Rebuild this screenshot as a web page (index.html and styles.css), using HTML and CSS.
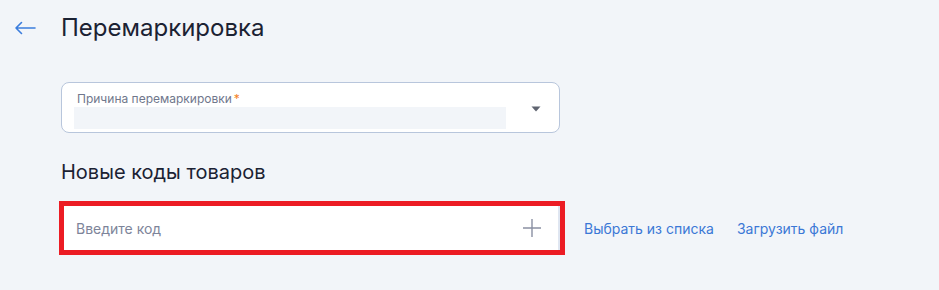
FILE: index.html
```html
<!DOCTYPE html>
<html lang="ru">
<head>
<meta charset="utf-8">
<link rel="stylesheet" href="styles.css">
</head>
<body>
<div class="page">
  <header class="header">
    <button class="back" aria-label="Назад">
      <svg width="22" height="14" viewBox="0 0 22 14"><path d="M21 7H2M7.5 1.5L2 7l5.5 5.5" fill="none" stroke="#3b7ddd" stroke-width="1.6" stroke-linecap="round" stroke-linejoin="round"/></svg>
    </button>
    <h1 class="title">Перемаркировка</h1>
  </header>
  <div class="content">
    <div class="select">
      <div class="select-body">
        <div class="select-label">Причина перемаркировки<span class="req">*</span></div>
        <div class="select-value"></div>
      </div>
      <svg class="caret" width="10" height="6" viewBox="0 0 10 6"><path d="M0.5 0.5h9L5 5.5z" fill="#5f6470"/></svg>
    </div>
    <h2 class="subtitle">Новые коды товаров</h2>
    <div class="code-row">
      <div class="highlight">
        <div class="code-input">
          <span class="placeholder">Введите код</span>
          <svg class="plus" width="18" height="18" viewBox="0 0 18 18"><path d="M9 0v18M0 9h18" stroke="#8a90a3" stroke-width="1.4"/></svg>
        </div>
      </div>
      <a class="link" href="#">Выбрать из списка</a>
      <a class="link" href="#">Загрузить файл</a>
    </div>
  </div>
</div>
</body>
</html>
```
FILE: styles.css
```css
html, body {
  margin: 0;
  padding: 0;
  background: #f2f5f9;
  font-family: Inter, "Noto Sans", "Liberation Sans", sans-serif;
  color: #1b2233;
}
.page {
  width: 939px;
  height: 290px;
}
.header {
  display: flex;
  align-items: center;
  height: 54px;
  padding-left: 14px;
}
.back {
  border: 0;
  background: none;
  padding: 0;
  width: 22px;
  height: 14px;
  display: flex;
  margin-top: 1px;
}
.title {
  margin: 0 0 0 25px;
  font-size: 24px;
  font-weight: 400;
  color: #1b2233;
}
.content {
  padding-left: 61px;
  padding-top: 28px;
}
.select {
  box-sizing: border-box;
  width: 499px;
  height: 51px;
  background: #fff;
  border: 1px solid #b8c6dc;
  border-radius: 8px;
  display: flex;
  align-items: center;
  padding: 0 18px 0 12px;
}
.select-body {
  flex: 1;
  display: flex;
  flex-direction: column;
  padding-top: 4px;
}
.select-label {
  font-size: 12px;
  color: #70778c;
  padding-left: 3px;
  line-height: 15px;
}
.req {
  color: #f5821f;
  margin-left: 2px;
}
.select-value {
  width: 432px;
  height: 22px;
  margin-top: 1px;
  background: #f2f5f9;
}
.caret {
  margin-top: 2px;
}
.subtitle {
  margin: 26px 0 0 0;
  font-size: 20px;
  font-weight: 400;
  line-height: 26px;
  color: #1b2233;
}
.code-row {
  display: flex;
  align-items: center;
  margin-top: 16px;
  margin-left: -2px;
}
.highlight {
  box-sizing: border-box;
  width: 506px;
  height: 54px;
  border: 5px solid #ec1c24;
}
.code-input {
  box-sizing: border-box;
  height: 100%;
  width: 496px;
  background: #fff;
  border-right: 2px solid #dfe6f1;
  display: flex;
  align-items: center;
  justify-content: space-between;
  padding: 0 17px 0 12px;
}
.placeholder {
  font-size: 14px;
  color: #7d8499;
}
.link {
  font-size: 14px;
  color: #3b78d6;
  text-decoration: none;
  margin-left: 19px;
}
.link + .link {
  margin-left: 23px;
}
```
